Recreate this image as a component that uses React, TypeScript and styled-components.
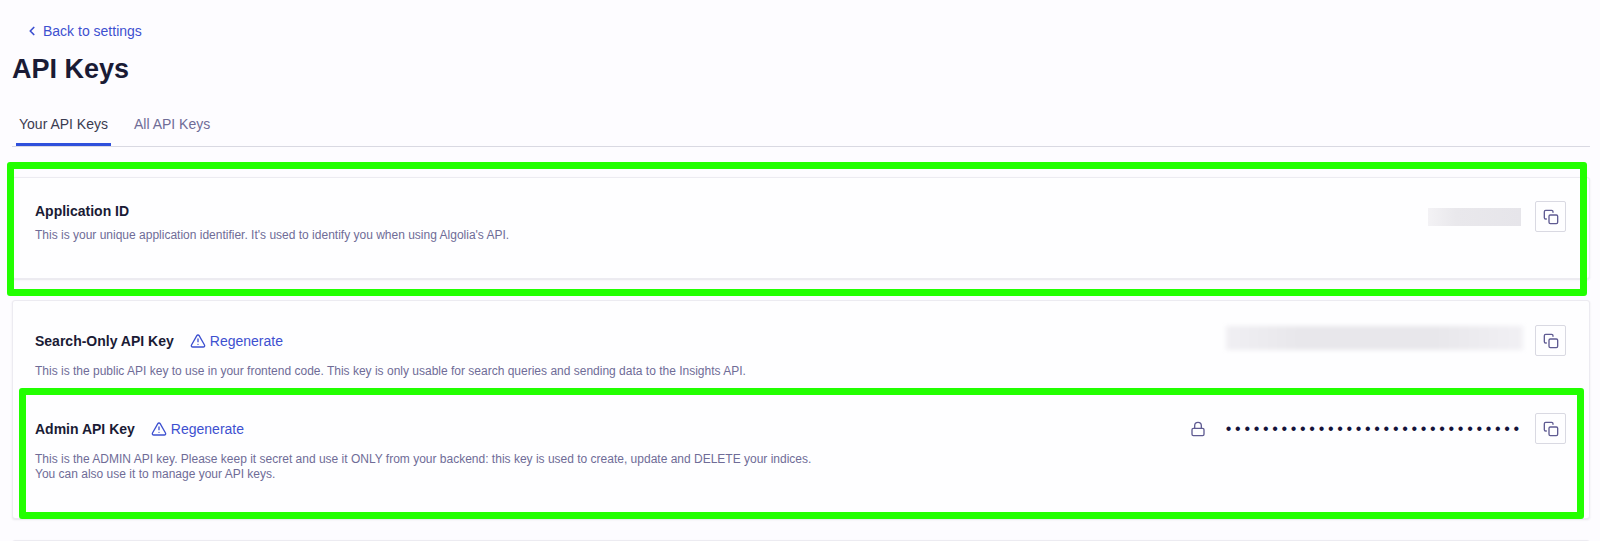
import React from "react";
import styled, { createGlobalStyle, css } from "styled-components";
import { AlertTriangle, ChevronLeft, Lock } from "lucide-react";

const color = {
  page: "#fdfcff",
  card: "#fefeff",
  ink: "#1a1b35",
  muted: "#6f6c97",
  tab: "#3a3b50",
  link: "#3d50d0",
  active: "#2f50dc",
  line: "#d9d9e2",
  soft: "#ecebf1",
  icon: "#5f5b92",
  highlight: "#22ff00",
};

const GlobalStyle = createGlobalStyle`
  * { box-sizing: border-box; }
  body {
    margin: 0;
    background: ${color.page};
    color: ${color.ink};
    font-family: "Liberation Sans", Arial, sans-serif;
    font-size: 14px;
    line-height: 16px;
  }
  h1, h2, p { margin: 0; }
`;

const Page = styled.main`
  padding: 23px 10px 0 12px;
  height: 100vh;
  overflow: hidden;
`;

const BackLink = styled.a`
  display: flex;
  align-items: center;
  gap: 4px;
  width: fit-content;
  margin-left: 13px;
  color: ${color.link};
  text-decoration: none;
`;

const Title = styled.h1`
  margin-top: 14px;
  font-size: 27px;
  line-height: 32px;
`;

const Tabs = styled.nav`
  display: flex;
  gap: 20px;
  margin-top: 22px;
  padding-left: 4px;
  border-bottom: 1px solid ${color.line};
`;

const Tab = styled.a<{ $active?: boolean }>`
  padding: 9px 3px 11px;
  border-bottom: 3px solid ${(p) => (p.$active ? color.active : "transparent")};
  color: ${(p) => (p.$active ? color.tab : color.muted)};
  text-decoration: none;
`;

const Card = styled.section`
  position: relative;
  background: ${color.card};
  border: 1px solid ${color.soft};
  border-radius: 3px;
  box-shadow: 0 1px 2px rgba(35, 38, 59, 0.1);
  margin-top: 21px;

  &:first-of-type {
    margin-top: 30px;
  }
`;

const Entry = styled.div<{ $top: number; $bottom: number }>`
  position: relative;
  display: flex;
  justify-content: space-between;
  align-items: flex-start;
  padding: ${(p) => p.$top}px 23px ${(p) => p.$bottom}px 22px;
`;

const Highlight = styled.div<{ $inset: string }>`
  position: absolute;
  inset: ${(p) => p.$inset};
  border: 7px solid ${color.highlight};
  border-radius: 3px;
  pointer-events: none;
`;

const Heading = styled.div<{ $compact?: boolean }>`
  display: flex;
  align-items: center;
  gap: 16px;
  height: ${(p) => (p.$compact ? 19 : 31)}px;
`;

const Name = styled.h2`
  font-size: 14px;
  line-height: 16px;
`;

const Regenerate = styled.button`
  display: flex;
  align-items: center;
  gap: 4px;
  padding: 0;
  border: 0;
  background: none;
  color: ${color.link};
  font: inherit;
  cursor: pointer;
`;

const Description = styled.p`
  margin-top: 8px;
  color: ${color.muted};
  font-size: 12px;
  line-height: 15px;
`;

const Value = styled.div`
  display: flex;
  align-items: center;
  gap: 14px;
`;

const CopyButton = styled.button`
  display: grid;
  place-items: center;
  width: 31px;
  height: 31px;
  padding: 0;
  border: 1px solid ${color.line};
  border-radius: 2px;
  background: ${color.card};
  color: ${color.icon};
  cursor: pointer;
`;

const Redacted = styled.div<{ $large?: boolean }>`
  width: 93px;
  height: 18px;
  background: linear-gradient(90deg, #f3f2f5, #e9e8ec 30%, #e6e5ea);

  ${(p) =>
    p.$large &&
    css`
      width: 297px;
      height: 24px;
      margin: 0 -2px 5px 0;
      background: linear-gradient(90deg, #f0eff3, #e8e7eb 25%, #e8e7eb 70%, #f1f0f4);
      filter: blur(2px);
    `}
`;

const Masked = styled.div`
  display: flex;
  align-items: center;
  gap: 18px;
  color: ${color.icon};
`;

const Dots = styled.div`
  display: grid;
  grid-template-columns: repeat(32, 1fr);
  width: 297px;
  color: #15133a;
  font-size: 16px;
  text-align: center;
`;

function CopyControl({ label }: { label: string }) {
  return (
    <CopyButton type="button" aria-label={`Copy ${label}`}>
      <svg
        width="16"
        height="16"
        viewBox="0 0 24 24"
        fill="none"
        stroke="currentColor"
        strokeWidth="2"
        strokeLinecap="round"
        strokeLinejoin="round"
        aria-hidden="true"
      >
        <rect x="9" y="9" width="13" height="13" rx="2" />
        <path d="M5 15H4a2 2 0 0 1-2-2V4a2 2 0 0 1 2-2h9a2 2 0 0 1 2 2v1" />
      </svg>
    </CopyButton>
  );
}

function RegenerateControl() {
  return (
    <Regenerate type="button">
      <AlertTriangle size={16} strokeWidth={2} />
      Regenerate
    </Regenerate>
  );
}

export default function App() {
  return (
    <>
      <GlobalStyle />
      <Page>
        <BackLink href="#settings">
          <ChevronLeft size={14} strokeWidth={3} />
          Back to settings
        </BackLink>
        <Title>API Keys</Title>
        <Tabs>
          <Tab href="#your-keys" $active aria-current="page">
            Your API Keys
          </Tab>
          <Tab href="#all-keys">All API Keys</Tab>
        </Tabs>

        <Card>
          <Entry $top={23} $bottom={35}>
            <div>
              <Heading $compact>
                <Name>Application ID</Name>
              </Heading>
              <Description>
                This is your unique application identifier. It's used to identify you when using Algolia's API.
              </Description>
            </div>
            <Value>
              <Redacted />
              <CopyControl label="Application ID" />
            </Value>
          </Entry>
          <Highlight $inset="-16px 2px -18px -6px" />
        </Card>

        <Card>
          <Entry $top={24} $bottom={0}>
            <div>
              <Heading>
                <Name>Search-Only API Key</Name>
                <RegenerateControl />
              </Heading>
              <Description>
                This is the public API key to use in your frontend code. This key is only usable for search queries and
                sending data to the Insights API.
              </Description>
            </div>
            <Value>
              <Redacted $large />
              <CopyControl label="Search-Only API Key" />
            </Value>
          </Entry>
          <Entry $top={34} $bottom={36}>
            <div>
              <Heading>
                <Name>Admin API Key</Name>
                <RegenerateControl />
              </Heading>
              <Description>
                This is the ADMIN API key. Please keep it secret and use it ONLY from your backend: this key is used to
                create, update and DELETE your indices.
                <br />
                You can also use it to manage your API keys.
              </Description>
            </div>
            <Value>
              <Masked>
                <Lock size={16} strokeWidth={2} />
                <Dots role="img" aria-label="Hidden key">
                  {Array.from({ length: 32 }, (_, i) => (
                    <span key={i}>•</span>
                  ))}
                </Dots>
              </Masked>
              <CopyControl label="Admin API Key" />
            </Value>
            <Highlight $inset="9px 5px -1px 6px" />
          </Entry>
        </Card>

        <Card>
          <Entry $top={24} $bottom={24} />
        </Card>
      </Page>
    </>
  );
}
